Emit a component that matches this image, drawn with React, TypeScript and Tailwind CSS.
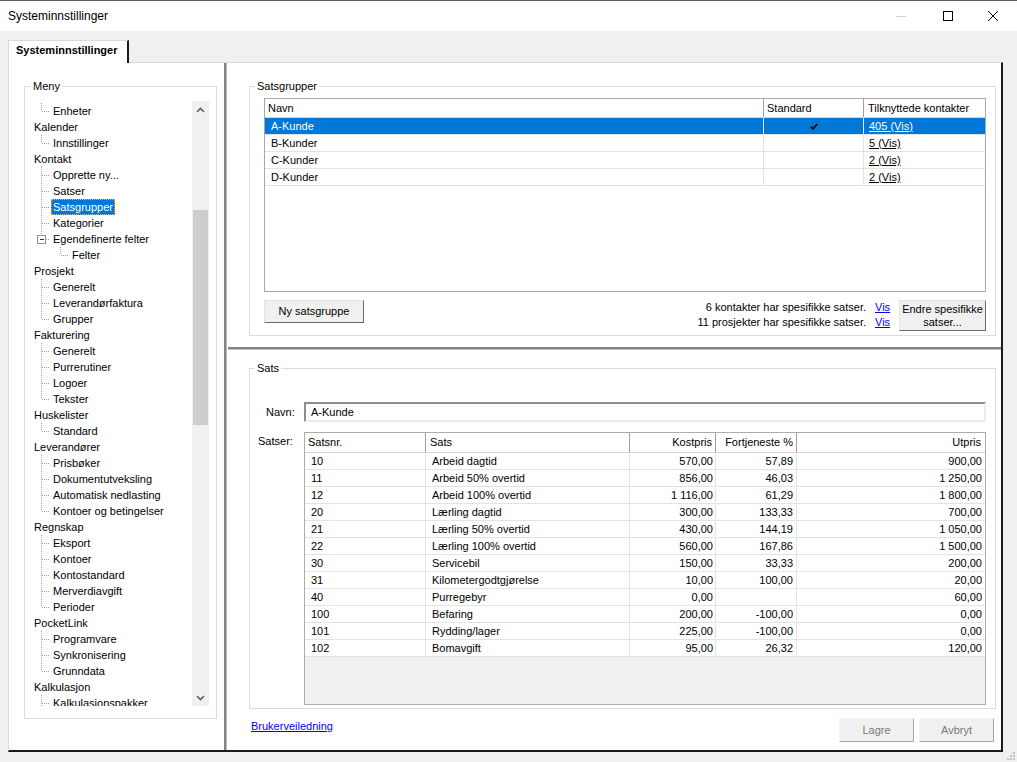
import React from 'react';

type TreeNode = { t: string; l: 0 | 1 | 2; last?: boolean; box?: boolean; sel?: boolean };

const TREE: TreeNode[] = [
  { t: 'Enheter', l: 1, last: true },
  { t: 'Kalender', l: 0 },
  { t: 'Innstillinger', l: 1, last: true },
  { t: 'Kontakt', l: 0 },
  { t: 'Opprette ny...', l: 1 },
  { t: 'Satser', l: 1 },
  { t: 'Satsgrupper', l: 1, sel: true },
  { t: 'Kategorier', l: 1 },
  { t: 'Egendefinerte felter', l: 1, last: true, box: true },
  { t: 'Felter', l: 2, last: true },
  { t: 'Prosjekt', l: 0 },
  { t: 'Generelt', l: 1 },
  { t: 'Leverandørfaktura', l: 1 },
  { t: 'Grupper', l: 1, last: true },
  { t: 'Fakturering', l: 0 },
  { t: 'Generelt', l: 1 },
  { t: 'Purrerutiner', l: 1 },
  { t: 'Logoer', l: 1 },
  { t: 'Tekster', l: 1, last: true },
  { t: 'Huskelister', l: 0 },
  { t: 'Standard', l: 1, last: true },
  { t: 'Leverandører', l: 0 },
  { t: 'Prisbøker', l: 1 },
  { t: 'Dokumentutveksling', l: 1 },
  { t: 'Automatisk nedlasting', l: 1 },
  { t: 'Kontoer og betingelser', l: 1, last: true },
  { t: 'Regnskap', l: 0 },
  { t: 'Eksport', l: 1 },
  { t: 'Kontoer', l: 1 },
  { t: 'Kontostandard', l: 1 },
  { t: 'Merverdiavgift', l: 1 },
  { t: 'Perioder', l: 1, last: true },
  { t: 'PocketLink', l: 0 },
  { t: 'Programvare', l: 1 },
  { t: 'Synkronisering', l: 1 },
  { t: 'Grunndata', l: 1, last: true },
  { t: 'Kalkulasjon', l: 0 },
  { t: 'Kalkulasjonspakker', l: 1 },
];

const GROUPS = [
  { name: 'A-Kunde', std: true, link: '405 (Vis)', sel: true },
  { name: 'B-Kunder', std: false, link: '5 (Vis)', sel: false },
  { name: 'C-Kunder', std: false, link: '2 (Vis)', sel: false },
  { name: 'D-Kunder', std: false, link: '2 (Vis)', sel: false },
];

const SATS = [
  ['10', 'Arbeid dagtid', '570,00', '57,89', '900,00'],
  ['11', 'Arbeid 50% overtid', '856,00', '46,03', '1 250,00'],
  ['12', 'Arbeid 100% overtid', '1 116,00', '61,29', '1 800,00'],
  ['20', 'Lærling dagtid', '300,00', '133,33', '700,00'],
  ['21', 'Lærling 50% overtid', '430,00', '144,19', '1 050,00'],
  ['22', 'Lærling 100% overtid', '560,00', '167,86', '1 500,00'],
  ['30', 'Servicebil', '150,00', '33,33', '200,00'],
  ['31', 'Kilometergodtgjørelse', '10,00', '100,00', '20,00'],
  ['40', 'Purregebyr', '0,00', '', '60,00'],
  ['100', 'Befaring', '200,00', '-100,00', '0,00'],
  ['101', 'Rydding/lager', '225,00', '-100,00', '0,00'],
  ['102', 'Bomavgift', '95,00', '26,32', '120,00'],
];

const dot = { stroke: '#a0a0a0', strokeDasharray: '1 1', shapeRendering: 'crispEdges' as const };

function Lines({ n }: { n: TreeNode }) {
  const w = n.l === 0 ? 7 : n.l === 1 ? 26 : 45;
  return (
    <svg width={w} height={16} className="shrink-0">
      {n.l === 1 && !n.box && (
        <>
          <line x1={16.5} y1={0} x2={16.5} y2={n.last ? 8 : 16} {...dot} />
          <line x1={17} y1={8.5} x2={25} y2={8.5} {...dot} />
        </>
      )}
      {n.box && (
        <>
          <line x1={16.5} y1={0} x2={16.5} y2={4} {...dot} />
          <rect x={12.5} y={4.5} width={8} height={8} fill="#fff" stroke="#919191" shapeRendering="crispEdges" />
          <line x1={14.5} y1={8.5} x2={18.5} y2={8.5} stroke="#333" shapeRendering="crispEdges" />
          <line x1={21} y1={8.5} x2={25} y2={8.5} {...dot} />
        </>
      )}
      {n.l === 2 && (
        <>
          <line x1={35.5} y1={0} x2={35.5} y2={8} {...dot} />
          <line x1={36} y1={8.5} x2={44} y2={8.5} {...dot} />
        </>
      )}
    </svg>
  );
}

function Chevron({ down }: { down?: boolean }) {
  return (
    <svg width="9" height="6" viewBox="0 0 9 6">
      <path d={down ? 'M1 1 L4.5 4.5 L8 1' : 'M1 5 L4.5 1.5 L8 5'} fill="none" stroke="#606060" strokeWidth="1.6" />
    </svg>
  );
}

function GroupBox({ title, className, legend, children }: { title: string; className: string; legend: string; children: React.ReactNode }) {
  return (
    <fieldset className={`border border-[#dcdcdc] min-w-0 ${className}`}>
      <legend className={`${legend} px-[2px] leading-[14px]`}>{title}</legend>
      {children}
    </fieldset>
  );
}

function Btn({ className, disabled, children }: { className: string; disabled?: boolean; children: React.ReactNode }) {
  return (
    <button
      className={`bg-[#f0f0f0] border ${
        disabled
          ? 'border-t-[#f7f7f7] border-l-[#f7f7f7] border-b-[#a8a8a8] border-r-[#a8a8a8] text-[#7a7a7a]'
          : 'border-t-[#e3e3e3] border-l-[#e3e3e3] border-b-[#696969] border-r-[#696969]'
      } flex items-center justify-center text-center ${className}`}
    >
      {children}
    </button>
  );
}

function TitleBar() {
  return (
    <div className="h-[31px] bg-white border-t border-[#5c5c5c] flex items-center pr-[1px]">
      <div className="flex-1 pl-[8px] text-[12px]">Systeminnstillinger</div>
      <div className="w-[46px] h-full flex items-center justify-center">
        <div className="w-[10px] h-px bg-[#d0d0d0]" />
      </div>
      <div className="w-[46px] h-full flex items-center justify-center">
        <div className="w-[10px] h-[10px] border border-black ml-[1px]" />
      </div>
      <div className="w-[46px] h-full flex items-center justify-center">
        <svg width="10" height="10" viewBox="0 0 10 10">
          <path d="M0 0 L10 10 M10 0 L0 10" stroke="#000" strokeWidth="1" />
        </svg>
      </div>
    </div>
  );
}

function Tree() {
  return (
    <div className="mt-[8px] mr-[7px] h-[605px] flex">
      <div className="flex-1 overflow-hidden pt-[2px]">
        {TREE.map((n, i) => (
          <div key={i} className="h-[16px] flex items-center whitespace-nowrap">
            <Lines n={n} />
            <span
              className={`px-[2px] h-[16px] leading-[16px] ${
                n.sel ? 'bg-[#0078d7] text-white outline outline-1 outline-dotted outline-[#f0b060] -outline-offset-1' : ''
              }`}
            >
              {n.t}
            </span>
          </div>
        ))}
      </div>
      <div className="w-[17px] bg-[#f0f0f0] flex flex-col">
        <div className="h-[17px] flex items-center justify-center">
          <Chevron />
        </div>
        <div className="h-[92px]" />
        <div className="h-[215px] mx-[1px] bg-[#cdcdcd]" />
        <div className="flex-1" />
        <div className="h-[17px] flex items-center justify-center">
          <Chevron down />
        </div>
      </div>
    </div>
  );
}

function GroupGrid() {
  const cols = 'grid grid-cols-[499px_100px_1fr]';
  return (
    <div className="mt-[5px] ml-[14px] mr-[9px] h-[194px] border border-[#a8a8a8] bg-white overflow-hidden">
      <div className={`${cols} h-[19px] border-b border-[#d5d5d5] leading-[18px]`}>
        <div className="border-r border-[#a0a0a0] pl-[3px]">Navn</div>
        <div className="border-r border-[#a0a0a0] pl-[3px]">Standard</div>
        <div className="pl-[4px] whitespace-nowrap">Tilknyttede kontakter</div>
      </div>
      {GROUPS.map((g) => (
        <div key={g.name} className={`${cols} h-[17px] leading-[16px] ${g.sel ? 'bg-[#0078d7] text-white' : ''}`}>
          <div className="border-r border-b border-[#e3e3e3] pl-[6px]">{g.name}</div>
          <div className="border-r border-b border-[#e3e3e3] flex items-center justify-center">
            {g.std && (
              <svg width="8" height="7" viewBox="0 0 8 7">
                <path d="M0.8 3.6 L3 5.8 L7.2 1" fill="none" stroke="#000" strokeWidth="1.7" />
              </svg>
            )}
          </div>
          <div className="border-b border-[#e3e3e3] pl-[5px]">
            <span className="underline">{g.link}</span>
          </div>
        </div>
      ))}
    </div>
  );
}

function SatsGrid() {
  const cols = 'grid grid-cols-[121px_204px_86px_81px_1fr]';
  const cell = 'border-r border-b border-[#e3e3e3] whitespace-nowrap overflow-hidden';
  return (
    <div className="flex-1 mr-[9px] border border-[#acacac] bg-[#f0f0f0] overflow-hidden">
      <div className={`${cols} h-[20px] bg-white border-b border-[#d5d5d5] leading-[19px]`}>
        <div className="border-r border-[#a0a0a0] pl-[3px]">Satsnr.</div>
        <div className="border-r border-[#a0a0a0] pl-[4px]">Sats</div>
        <div className="border-r border-[#a0a0a0] pr-[3px] text-right">Kostpris</div>
        <div className="border-r border-[#a0a0a0] pr-[3px] text-right">Fortjeneste %</div>
        <div className="pr-[4px] text-right">Utpris</div>
      </div>
      {SATS.map((r) => (
        <div key={r[0]} className={`${cols} h-[17px] bg-white leading-[16px]`}>
          <div className={`${cell} pl-[6px]`}>{r[0]}</div>
          <div className={`${cell} pl-[6px]`}>{r[1]}</div>
          <div className={`${cell} pr-[2px] text-right`}>{r[2]}</div>
          <div className={`${cell} pr-[3px] text-right`}>{r[3]}</div>
          <div className="border-b border-[#e3e3e3] pr-[3px] text-right">{r[4]}</div>
        </div>
      ))}
    </div>
  );
}

export default function App() {
  return (
    <div className="w-[1017px] h-[762px] flex flex-col overflow-hidden bg-[#f0f0f0] text-[11px] text-black font-['Liberation_Sans',Arial,sans-serif] select-none">
      <TitleBar />
      <div className="flex flex-col pl-[8px] pr-[14px] pt-[9px]">
        {/* Tab strip */}
        <div className="flex h-[22px]">
          <div className="relative z-10 w-[121px] h-[23px] bg-white border-t border-l border-[#dadada] border-r-2 border-r-[#1a1a1a] pl-[7px] font-bold leading-[19px] whitespace-nowrap">
            Systeminnstillinger
          </div>
        </div>

        {/* Tab page */}
        <div className="h-[690px] flex bg-white border-t border-l border-[#dadada] border-r-2 border-b-2 border-r-[#1a1a1a] border-b-[#1a1a1a]">
          {/* Menu */}
          <div className="w-[214px] flex flex-col">
            <GroupBox title="Meny" legend="ml-[6px]" className="ml-[15px] mt-[16px] w-[193px] h-[640px]">
              <Tree />
            </GroupBox>
          </div>

          {/* Vertical splitter */}
          <div className="w-[5px] flex">
            <div className="w-px bg-white" />
            <div className="w-[2px] bg-[#828282]" />
            <div className="w-px bg-[#bdbdbd]" />
            <div className="w-px bg-white" />
          </div>

          {/* Right side */}
          <div className="flex-1 flex flex-col min-w-0">
            <div className="h-[283px] pt-[16px] pl-[21px] pr-[5px]">
              <GroupBox title="Satsgrupper" legend="ml-[5px]" className="h-[257px]">
                <GroupGrid />
                <div className="mt-[8px] ml-[14px] mr-[9px] flex items-start">
                  <Btn className="w-[100px] h-[23px]">Ny satsgruppe</Btn>
                  <div className="flex-1 flex flex-col items-end leading-[15px] whitespace-nowrap">
                    <div className="flex">
                      <span>6 kontakter har spesifikke satser.</span>
                      <span className="ml-[9px] w-[24px] text-[#0000ff] underline">Vis</span>
                    </div>
                    <div className="flex">
                      <span>11 prosjekter har spesifikke satser.</span>
                      <span className="ml-[9px] w-[24px] text-[#0000ff] underline">Vis</span>
                    </div>
                  </div>
                  <Btn className="w-[87px] h-[31px] leading-[13px]">
                    Endre spesifikke
                    <br />
                    satser...
                  </Btn>
                </div>
              </GroupBox>
            </div>

            {/* Horizontal splitter */}
            <div className="h-[4px] flex flex-col">
              <div className="h-px bg-white" />
              <div className="h-[2px] bg-[#828282]" />
              <div className="h-px bg-[#c4c4c4]" />
            </div>

            <div className="h-[400px] pt-[11px] pl-[21px] pr-[5px] flex flex-col">
              <GroupBox title="Sats" legend="ml-[5px]" className="h-[348px]">
                <div className="mt-[27px] h-[20px] flex items-center">
                  <div className="w-[54px] pl-[16px]">Navn:</div>
                  <div className="flex-1 mr-[9px] h-[20px] border-2 border-t-[#8d8d8d] border-l-[#8d8d8d] border-b-[#ececec] border-r-[#ececec] pl-[5px] leading-[16px] bg-white">
                    A-Kunde
                  </div>
                </div>
                <div className="mt-[10px] h-[273px] flex">
                  <div className="w-[54px] pl-[8px] pt-[2px] leading-[14px]">Satser:</div>
                  <SatsGrid />
                </div>
              </GroupBox>
              <div className="mt-[9px] h-[24px] flex">
                <span className="ml-[2px] mt-[1px] leading-[14px] h-[14px] text-[#0000ff] underline">Brukerveiledning</span>
                <div className="ml-auto mr-[2px] flex gap-[5px]">
                  <Btn disabled className="w-[75px] h-[24px]">Lagre</Btn>
                  <Btn disabled className="w-[75px] h-[24px]">Avbryt</Btn>
                </div>
              </div>
            </div>
          </div>
        </div>
      </div>
      <div className="h-[10px] flex justify-end items-end pr-[1px] pb-[1px]">
        <svg width="10" height="9" viewBox="0 0 10 9">
          {[
            [7, 6], [4, 6], [1, 6], [7, 3], [4, 3], [7, 0],
          ].map(([x, y]) => (
            <rect key={`${x}-${y}`} x={x} y={y} width="2" height="2" fill="#c2c2c2" />
          ))}
        </svg>
      </div>
    </div>
  );
}
